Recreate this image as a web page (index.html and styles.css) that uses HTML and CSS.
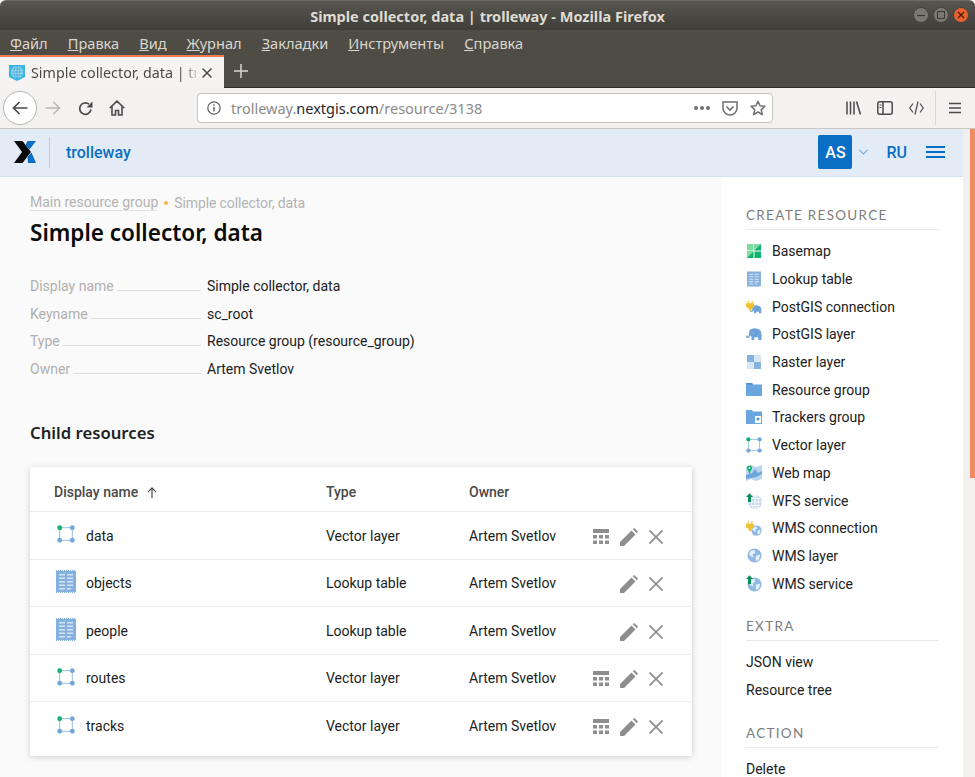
FILE: index.html
```html
<!DOCTYPE html>
<html lang="ru">
<head>
    <meta charset="UTF-8">
    <meta name="viewport" content="width=device-width, initial-scale=1.0">
    <title>Simple collector, data | trolleway</title>
    <link rel="stylesheet" href="styles.css">
</head>
<body>
    <svg class="defs" width="0" height="0">
        <symbol id="i-vector" viewBox="0 0 20 20">
            <path d="M3 3H17V17H3Z" fill="none" stroke="#8ab6e0" stroke-width="1"/>
            <circle cx="3" cy="3" r="2.7" fill="#0fb36b"/>
            <circle cx="17" cy="3" r="2.7" fill="#74a8da"/>
            <circle cx="3" cy="17" r="2.7" fill="#74a8da"/>
            <circle cx="17" cy="17" r="2.7" fill="#74a8da"/>
        </symbol>
        <symbol id="i-table" viewBox="0 0 20 23">
            <path d="M0 1H20V22H0Z" fill="#85b1de"/>
            <path d="M0 0.5H20M0 22.5H20" stroke="#85b1de" stroke-dasharray="1 1" fill="none"/>
            <path d="M3 4H9V5.5H3ZM11 4H17V5.5H11ZM3 7.5H9V9H3ZM11 7.5H17V9H11ZM3 11H9V12.5H3ZM11 11H17V12.5H11ZM3 14.5H9V16H3ZM11 14.5H17V16H11ZM3 18H9V19.5H3ZM11 18H15V19.5H11Z" fill="#d5e4f3"/>
        </symbol>
        <symbol id="i-globe" viewBox="0 0 16 16">
            <circle cx="8" cy="8" r="7.5" fill="#8fb8e2"/>
            <path d="M4 3L8 2L9 5L6 7L7 10L4 9L2 6ZM10 8L14 7L13 12L10 14L9 11Z" fill="#e4eef8"/>
        </symbol>
        <symbol id="i-grid" viewBox="0 0 16 16">
            <path d="M0 0H16V4H0ZM0 6H4V9.5H0ZM6 6H10V9.5H6ZM12 6H16V9.5H12ZM0 11.5H4V15H0ZM6 11.5H10V15H6ZM12 11.5H16V15H12Z" fill="#8e8e8e"/>
        </symbol>
        <symbol id="i-pencil" viewBox="0 0 18 18">
            <path d="M0 18V14L11.5 2.5L15.5 6.5L4 18ZM12.8 1.3L13.8 0.3Q14.2 0 14.7 0.3L17.7 3.3Q18 3.8 17.7 4.2L16.7 5.2Z" fill="#8e8e8e"/>
        </symbol>
        <symbol id="i-close" viewBox="0 0 14 14">
            <path d="M0.5 0.5L13.5 13.5M13.5 0.5L0.5 13.5" stroke="#8e8e8e" stroke-width="1.7" fill="none"/>
        </symbol>
        <symbol id="i-plug" viewBox="0 0 9 11">
            <path d="M1.8 0H3V3H6V0H7.2V3H9V6Q9 8 6 8.5V11H3V8.5Q0 8 0 6V3H1.8Z" fill="#f2c12e"/>
        </symbol>
        <symbol id="i-up" viewBox="0 0 8 10">
            <path d="M4 0L8 4.5H5.7V10H2.3V4.5H0Z" fill="#0b8f5a"/>
        </symbol>
        <symbol id="i-elephant" viewBox="0 0 19 14">
            <path d="M4.5 2Q8 -0.5 12 0.5Q18.5 1 18.5 8V14H14.5V11H10V14H6.5V10Q4 9 4 5.5Q4 3 4.5 2Z" fill="#70a4d9"/>
            <path d="M4.8 4Q4.2 11 2.2 11Q0.8 11 0.6 9" stroke="#70a4d9" stroke-width="1.8" fill="none"/>
            <path d="M8 2Q13 2 13 6Q13 9 9.5 9" stroke="#4f90cd" stroke-width="0.8" fill="none"/>
        </symbol>
    </svg>

    <header class="titlebar">
        <span class="titlebar-text">Simple collector, data | trolleway - Mozilla Firefox</span>
        <div class="wm-buttons">
            <span class="wm-btn"><svg width="8" height="8"><path d="M0 4.5H8" stroke="#3a3935" stroke-width="1.2"/></svg></span>
            <span class="wm-btn"><svg width="8" height="8"><path d="M0.5 0.5H7.5V7.5H0.5Z" stroke="#3a3935" fill="none"/></svg></span>
            <span class="wm-btn wm-close"><svg width="8" height="8"><path d="M1 1L7 7M7 1L1 7" stroke="#4a1c08" stroke-width="1.3"/></svg></span>
        </div>
    </header>

    <nav class="menubar">
        <span><u>Ф</u>айл</span>
        <span><u>П</u>равка</span>
        <span><u>В</u>ид</span>
        <span><u>Ж</u>урнал</span>
        <span><u>З</u>акладки</span>
        <span><u>И</u>нструменты</span>
        <span><u>С</u>правка</span>
    </nav>

    <div class="tabstrip">
        <div class="tab">
            <svg class="tab-icon" width="16" height="16" viewBox="0 0 16 16">
                <path d="M0 0H16V12L8 16L0 12Z" fill="#37b6e4"/>
                <circle cx="8" cy="7" r="6" fill="#a9dcef"/>
                <path d="M8 1V13M2 7H14M3 4H13M3 10H13" stroke="#37a7d6" stroke-width="0.8" fill="none"/>
                <ellipse cx="8" cy="7" rx="3" ry="6" stroke="#37a7d6" stroke-width="0.8" fill="none"/>
            </svg>
            <span class="tab-title">Simple collector, data | tr</span>
            <svg class="tab-close" width="10" height="10" viewBox="0 0 10 10"><path d="M0.5 0.5L9.5 9.5M9.5 0.5L0.5 9.5" stroke="#4a4a4a" stroke-width="1.5"/></svg>
        </div>
        <svg class="new-tab" width="14" height="14" viewBox="0 0 14 14"><path d="M7 0V14M0 7H14" stroke="#d8d6d0" stroke-width="1.5"/></svg>
    </div>

    <div class="toolbar">
        <div class="back-btn">
            <svg width="16" height="14" viewBox="0 0 16 14"><path d="M15.5 7H1.5M7.5 1L1.5 7L7.5 13" stroke="#4a4a4f" stroke-width="1.7" fill="none"/></svg>
        </div>
        <svg class="tool forward" width="16" height="14" viewBox="0 0 16 14"><path d="M0.5 7H14.5M8.5 1L14.5 7L8.5 13" stroke="#b8b8b8" stroke-width="1.7" fill="none"/></svg>
        <svg class="tool reload" width="15" height="15" viewBox="0 0 15 15"><path d="M13 8.5A5.7 5.7 0 1 1 11 3.2" stroke="#4a4a4f" stroke-width="1.7" fill="none"/><path d="M14.5 0.5V6.5H8.5Z" fill="#4a4a4f"/></svg>
        <svg class="tool home" width="16" height="16" viewBox="0 0 16 16"><path d="M0.8 8L8 1.2L15.2 8M3 6.5V15H6.5V10.5H9.5V15H13V6.5" stroke="#4a4a4f" stroke-width="1.6" fill="none"/></svg>
        <div class="urlbar">
            <svg width="14" height="14" viewBox="0 0 14 14"><circle cx="7" cy="7" r="6.2" stroke="#5f5f5f" stroke-width="1.2" fill="none"/><path d="M7 6V10.5M7 3.3V4.8" stroke="#5f5f5f" stroke-width="1.4"/></svg>
            <span class="url"><span class="url-dim">trolleway.</span>nextgis.com<span class="url-dim">/resource/3138</span></span>
            <span class="url-more"><i></i><i></i><i></i></span>
            <svg class="url-pocket" width="16" height="15" viewBox="0 0 16 15"><path d="M1 1H15V7A7 7 0 0 1 1 7Z" stroke="#6f6f6f" stroke-width="1.5" fill="none"/><path d="M4.5 5.5L8 9L11.5 5.5" stroke="#6f6f6f" stroke-width="1.6" fill="none"/></svg>
            <svg width="16" height="16" viewBox="0 0 16 16"><path d="M8 1.2L10 5.8L15 6.3L11.2 9.6L12.3 14.6L8 12L3.7 14.6L4.8 9.6L1 6.3L6 5.8Z" stroke="#6f6f6f" stroke-width="1.5" fill="none" stroke-linejoin="round"/></svg>
        </div>
        <div class="tools-right">
            <svg width="15" height="14" viewBox="0 0 15 14"><path d="M1 0.5V13.5M4.5 0.5V13.5M8 0.5V13.5M10.5 0.5L14.5 13.5" stroke="#4a4a4f" stroke-width="1.5" fill="none"/></svg>
            <svg width="16" height="14" viewBox="0 0 16 14"><rect x="0.8" y="0.8" width="14.4" height="12.4" rx="2" stroke="#4a4a4f" stroke-width="1.5" fill="none"/><path d="M6 1V13" stroke="#4a4a4f" stroke-width="1.5"/><path d="M2.5 4H4.5M2.5 6.5H4.5" stroke="#4a4a4f"/></svg>
            <svg width="15" height="14" viewBox="0 0 15 14"><path d="M4 2.5L0.8 7L4 11.5M11 2.5L14.2 7L11 11.5M9 0.5L6 13.5" stroke="#4a4a4f" stroke-width="1.2" fill="none"/></svg>
            <span class="tool-sep"></span>
            <svg width="12" height="12" viewBox="0 0 12 12"><path d="M0 1.5H12M0 6H12M0 10.5H12" stroke="#4a4a4f" stroke-width="1.6"/></svg>
        </div>
    </div>

    <div class="viewport">
        <div class="page">
            <div class="topbar">
                <svg class="logo" width="22" height="22" viewBox="0 0 22 22">
                    <path d="M0 0H8.5L17 11L8.5 22H0L8 11Z" fill="#0a0a0a"/>
                    <path d="M13.5 0H22L15.5 8.5L11.6 4Z" fill="#0a6fc4"/>
                    <path d="M17.5 11.5L22 22H14L13.5 16Z" fill="#0a6fc4"/>
                </svg>
                <span class="topbar-sep"></span>
                <span class="instance">trolleway</span>
                <span class="avatar">AS</span>
                <svg class="caret" width="9" height="6" viewBox="0 0 9 6"><path d="M0.5 0.8L4.5 4.8L8.5 0.8" stroke="#79aede" stroke-width="1.2" fill="none"/></svg>
                <span class="lang">RU</span>
                <span class="burger"><i></i><i></i><i></i></span>
            </div>
            <div class="columns">
                <main class="content">
                    <div class="crumbs"><a>Main resource group</a><b></b><span>Simple collector, data</span></div>
                    <h1>Simple collector, data</h1>
                    <dl class="props">
                        <div><dt><span>Display name</span></dt><dd>Simple collector, data</dd></div>
                        <div><dt><span>Keyname</span></dt><dd>sc_root</dd></div>
                        <div><dt><span>Type</span></dt><dd>Resource group (resource_group)</dd></div>
                        <div><dt><span>Owner</span></dt><dd>Artem Svetlov</dd></div>
                    </dl>
                    <h2>Child resources</h2>
                    <div class="card">
                        <div class="row row-head">
                            <span class="col-name">Display name <svg class="sort" width="10" height="11" viewBox="0 0 11 12"><path d="M5.5 12V1.5M1 5.5L5.5 1L10 5.5" stroke="#4a4a4a" stroke-width="1.3" fill="none"/></svg></span>
                            <span class="col-type">Type</span>
                            <span class="col-owner">Owner</span>
                        </div>
                        <div class="row">
                            <span class="col-name"><span class="res-icon"><svg width="18" height="18"><use href="#i-vector"/></svg></span>data</span>
                            <span class="col-type">Vector layer</span>
                            <span class="col-owner">Artem Svetlov</span>
                            <span class="actions"><svg width="16" height="16"><use href="#i-grid"/></svg><svg width="18" height="18"><use href="#i-pencil"/></svg><svg width="14" height="14"><use href="#i-close"/></svg></span>
                        </div>
                        <div class="row">
                            <span class="col-name"><span class="res-icon"><svg width="20" height="23"><use href="#i-table"/></svg></span>objects</span>
                            <span class="col-type">Lookup table</span>
                            <span class="col-owner">Artem Svetlov</span>
                            <span class="actions"><svg width="18" height="18"><use href="#i-pencil"/></svg><svg width="14" height="14"><use href="#i-close"/></svg></span>
                        </div>
                        <div class="row">
                            <span class="col-name"><span class="res-icon"><svg width="20" height="23"><use href="#i-table"/></svg></span>people</span>
                            <span class="col-type">Lookup table</span>
                            <span class="col-owner">Artem Svetlov</span>
                            <span class="actions"><svg width="18" height="18"><use href="#i-pencil"/></svg><svg width="14" height="14"><use href="#i-close"/></svg></span>
                        </div>
                        <div class="row">
                            <span class="col-name"><span class="res-icon"><svg width="18" height="18"><use href="#i-vector"/></svg></span>routes</span>
                            <span class="col-type">Vector layer</span>
                            <span class="col-owner">Artem Svetlov</span>
                            <span class="actions"><svg width="16" height="16"><use href="#i-grid"/></svg><svg width="18" height="18"><use href="#i-pencil"/></svg><svg width="14" height="14"><use href="#i-close"/></svg></span>
                        </div>
                        <div class="row">
                            <span class="col-name"><span class="res-icon"><svg width="18" height="18"><use href="#i-vector"/></svg></span>tracks</span>
                            <span class="col-type">Vector layer</span>
                            <span class="col-owner">Artem Svetlov</span>
                            <span class="actions"><svg width="16" height="16"><use href="#i-grid"/></svg><svg width="18" height="18"><use href="#i-pencil"/></svg><svg width="14" height="14"><use href="#i-close"/></svg></span>
                        </div>
                    </div>
                </main>
                <aside class="sidebar">
                    <h3>Create resource</h3>
                    <ul class="side-list">
                        <li><span class="side-icon"><svg width="14" height="14" viewBox="0 0 14 14"><path d="M0 0H6.5V6.5H0Z" fill="#7fdc9f"/><path d="M7.5 0H14V6.5H7.5ZM0 7.5H6.5V14H0ZM7.5 7.5H14V14H7.5Z" fill="#0fb36b"/><path d="M7.5 6.5L14 0H7.5Z" fill="#7fdc9f"/><path d="M0 14L6.5 7.5H0Z" fill="#7fdc9f"/></svg></span>Basemap</li>
                        <li><span class="side-icon"><svg width="14" height="16"><use href="#i-table"/></svg></span>Lookup table</li>
                        <li><span class="side-icon"><svg width="17" height="14" viewBox="0 0 17 14"><use href="#i-elephant" x="4" y="5" width="13" height="9"/><use href="#i-plug" x="0" y="0" width="9" height="11"/></svg></span>PostGIS connection</li>
                        <li><span class="side-icon"><svg width="19" height="14"><use href="#i-elephant"/></svg></span>PostGIS layer</li>
                        <li><span class="side-icon"><svg width="14" height="14" viewBox="0 0 14 14"><path d="M0 0H7V7H0Z" fill="#86b2de"/><path d="M7 7H14V14H7Z" fill="#86b2de"/><path d="M7 0H14V7H7ZM0 7H7V14H0Z" fill="#d9e6f4"/></svg></span>Raster layer</li>
                        <li><span class="side-icon"><svg width="16" height="13" viewBox="0 0 16 13"><path d="M0 0H6L7 1.5H16V13H0Z" fill="#6ba7de"/><path d="M0 0H6L7 1.5H0Z" fill="#4f90cd"/></svg></span>Resource group</li>
                        <li><span class="side-icon"><svg width="16" height="14" viewBox="0 0 16 14"><path d="M0 0H6L7 1.5H16V14H0Z" fill="#6ba7de"/><rect x="9" y="6" width="6" height="7" fill="#fff"/><circle cx="12" cy="9" r="1.5" fill="#4f90cd"/></svg></span>Trackers group</li>
                        <li><span class="side-icon"><svg width="16" height="16"><use href="#i-vector"/></svg></span>Vector layer</li>
                        <li><span class="side-icon"><svg width="16" height="16" viewBox="0 0 16 16"><path d="M0 2L5 0L10 2L16 0V14L10 16L5 14L0 16Z" fill="#bcd6ee"/><path d="M0 10L6 8L9 4L12 8L16 6V9L10 12L0 14Z" fill="#6ba7de"/><circle cx="3.5" cy="3" r="2.5" fill="#0fb36b"/><path d="M1.8 4.5L3.5 9L5.2 4.5Z" fill="#0fb36b"/><circle cx="3.5" cy="3" r="0.9" fill="#fff"/></svg></span>Web map</li>
                        <li><span class="side-icon"><svg width="16" height="16" viewBox="0 0 16 16"><circle cx="9" cy="9" r="7" fill="#c5d9ee"/><path d="M2 9H16M9 2V16M3.5 5.5H14.5M3.5 12.5H14.5" stroke="#fff" stroke-width="0.8"/><ellipse cx="9" cy="9" rx="3.5" ry="7" stroke="#fff" stroke-width="0.8" fill="none"/><use href="#i-up" x="0" y="0" width="7" height="9"/></svg></span>WFS service</li>
                        <li><span class="side-icon"><svg width="16" height="15" viewBox="0 0 16 15"><use href="#i-globe" x="5" y="4" width="11" height="11"/><use href="#i-plug" x="0" y="0" width="8" height="10"/></svg></span>WMS connection</li>
                        <li><span class="side-icon"><svg width="15" height="15"><use href="#i-globe"/></svg></span>WMS layer</li>
                        <li><span class="side-icon"><svg width="16" height="17" viewBox="0 0 16 17"><use href="#i-globe" x="1" y="2" width="15" height="15"/><use href="#i-up" x="0" y="0" width="7" height="9"/></svg></span>WMS service</li>
                    </ul>
                    <h3>Extra</h3>
                    <ul class="side-list">
                        <li>JSON view</li>
                        <li>Resource tree</li>
                    </ul>
                    <h3>Action</h3>
                    <ul class="side-list">
                        <li>Delete</li>
                    </ul>
                </aside>
            </div>
        </div>
        <div class="scrollbar"><div class="thumb"></div></div>
    </div>
</body>
</html>
```

FILE: styles.css
```css
* {
    box-sizing: border-box;
}
html, body {
    margin: 0;
    height: 777px;
    overflow: hidden;
}
body {
    font-family: Roboto, sans-serif;
    font-size: 14px;
    display: flex;
    flex-direction: column;
    background: #fafafa;
}
.defs {
    position: absolute;
}

/* browser chrome */
.titlebar {
    height: 30px;
    flex: none;
    display: flex;
    align-items: center;
    justify-content: center;
    position: relative;
    background: linear-gradient(#57554e, #3f3e39);
    border-top: 1px solid #6b6a63;
    border-radius: 6px 6px 0 0;
    color: #dfdbd2;
    font-family: "Noto Sans", sans-serif;
    font-weight: 700;
    font-size: 14.5px;
}
.wm-buttons {
    position: absolute;
    right: 6px;
    top: 6px;
    display: flex;
    gap: 4px;
}
.wm-btn {
    width: 16px;
    height: 16px;
    border-radius: 50%;
    background: #7a7870;
    border: 1px solid #45443f;
    display: flex;
    align-items: center;
    justify-content: center;
}
.wm-close {
    background: #e9602f;
}
.menubar {
    height: 25px;
    flex: none;
    display: flex;
    align-items: center;
    gap: 20px;
    padding-left: 10px;
    background: #4f4c45;
    color: #d9d6cd;
    font-family: "Noto Sans", sans-serif;
    font-size: 14.6px;
}
.tabstrip {
    height: 33px;
    flex: none;
    display: flex;
    align-items: flex-start;
    background: #4f4c45;
    border-bottom: 1px solid #2e2d29;
}
.tab {
    width: 224px;
    height: 33px;
    display: flex;
    align-items: center;
    gap: 6px;
    padding: 0 12px 0 9px;
    background: #f5f4f2;
    border-top: 2px solid #f07d52;
    color: #4a4a4a;
    font-family: "Noto Sans", sans-serif;
    font-size: 14.3px;
}
.tab-icon, .tab-close {
    flex: none;
}
.tab-title {
    flex: 1;
    min-width: 0;
    white-space: nowrap;
    -webkit-mask-image: linear-gradient(90deg, #000 90%, rgba(0, 0, 0, 0.25));
    mask-image: linear-gradient(90deg, #000 90%, rgba(0, 0, 0, 0.25));
}
.new-tab {
    margin: 9px 0 0 10px;
}
.toolbar {
    height: 41px;
    flex: none;
    display: flex;
    align-items: center;
    background: #f3f2f0;
    border-bottom: 1px solid #c8c7c4;
    padding-left: 3px;
}
.back-btn {
    width: 34px;
    height: 34px;
    flex: none;
    border-radius: 50%;
    background: #fff;
    border: 1px solid #b5b5b5;
    display: flex;
    align-items: center;
    justify-content: center;
}
.tool {
    flex: none;
}
.forward {
    margin-left: 8px;
}
.reload {
    margin-left: 17px;
}
.home {
    margin-left: 16px;
}
.urlbar {
    width: 576px;
    height: 30px;
    margin-left: 72px;
    flex: none;
    display: flex;
    align-items: center;
    gap: 8px;
    padding: 0 6px 0 9px;
    background: #fff;
    border: 1px solid #c5c5c5;
    border-radius: 4px;
}
.url {
    flex: 1;
    margin-left: 2px;
    font-family: "Noto Sans", sans-serif;
    font-size: 14.5px;
    color: #26262a;
}
.url-dim {
    color: #8a8a8a;
}
.url-more {
    display: flex;
    gap: 2px;
    margin-right: 4px;
}
.url-more i {
    width: 4px;
    height: 4px;
    border-radius: 50%;
    background: #6f6f6f;
}
.url-pocket {
    margin-right: 4px;
}
.tools-right {
    display: flex;
    align-items: center;
    gap: 16px;
    margin-left: 73px;
}
.tool-sep {
    width: 1px;
    height: 34px;
    background: #d8d7d4;
    margin: 0 -3px 0 -5px;
}

/* page */
.viewport {
    flex: 1;
    min-height: 0;
    display: flex;
}
.page {
    flex: 1;
    min-width: 0;
    display: flex;
    flex-direction: column;
}
.scrollbar {
    width: 12px;
    flex: none;
    background: #f1f0ee;
    display: flex;
    justify-content: flex-end;
    align-items: flex-start;
}
.thumb {
    width: 5px;
    height: 349px;
    background: #f08a63;
}
.topbar {
    height: 48px;
    flex: none;
    display: flex;
    align-items: center;
    padding: 0 18px 1px 14px;
    background: #e3ecf6;
    border-bottom: 1px solid #d9e3ee;
}
.topbar-sep {
    width: 1px;
    height: 31px;
    margin-left: 13px;
    background: #b5cde6;
}
.instance {
    margin-left: 16px;
    flex: 1;
    color: #0a6fc4;
    font-size: 16px;
    font-weight: 500;
}
.avatar {
    width: 34px;
    height: 34px;
    border-radius: 2px;
    background: #0a6fc4;
    color: #fff;
    font-size: 16px;
    font-weight: 500;
    display: flex;
    align-items: center;
    justify-content: center;
}
.caret {
    margin-left: 7px;
}
.lang {
    margin-left: 18px;
    color: #0a6fc4;
    font-size: 16px;
    font-weight: 500;
}
.burger {
    margin-left: 19px;
    width: 19px;
    display: flex;
    flex-direction: column;
    gap: 3px;
}
.burger i {
    height: 2px;
    background: #0a6fc4;
}
.columns {
    flex: 1;
    min-height: 0;
    display: flex;
}
.content {
    flex: 1;
    min-width: 0;
    padding: 17px 30px 0;
}
.crumbs {
    display: flex;
    align-items: center;
    color: #b3b3b3;
    height: 17px;
}
.crumbs a {
    border-bottom: 1px solid #e2e2e2;
}
.crumbs span {
    letter-spacing: -0.12px;
}
.crumbs b {
    width: 4px;
    height: 4px;
    border-radius: 50%;
    background: #f7b44a;
    margin: 0 6px;
}
h1 {
    margin: 6px 0 0;
    font-family: "Noto Sans", sans-serif;
    font-weight: 600;
    font-size: 22.5px;
    line-height: 32px;
    color: #0a0a0a;
}
.props {
    margin: 23px 0 0;
}
.props div {
    display: flex;
    height: 27.7px;
    align-items: center;
}
.props dt {
    width: 171px;
    margin-right: 6px;
    flex: none;
    color: #b0b0b0;
    display: flex;
    align-items: baseline;
}
.props dt::after {
    content: "";
    flex: 1;
    margin-left: 3px;
    border-bottom: 1px solid #dedede;
}
.props dd {
    margin: 0;
    color: #212121;
}
h2 {
    margin: 37px 0 0;
    font-family: "Noto Sans", sans-serif;
    font-weight: 600;
    font-size: 16.7px;
    line-height: 26px;
    color: #212121;
}
.card {
    margin-top: 21px;
    background: #fff;
    box-shadow: 0 1px 6px rgba(0, 0, 0, 0.18);
    padding-bottom: 6px;
}
.row {
    display: flex;
    align-items: center;
    height: 47.5px;
    padding-left: 24px;
    border-bottom: 1px solid #ececec;
    color: #212121;
    position: relative;
}
.row:last-child {
    border-bottom: 0;
}
.row-head {
    height: 45.5px;
    padding-top: 6px;
    font-weight: 500;
    color: #4a4a4a;
}
.col-name {
    width: 272px;
    flex: none;
    display: flex;
    align-items: center;
}
.sort {
    margin-left: 9px;
}
.res-icon {
    width: 32px;
    flex: none;
    display: flex;
    align-items: center;
    justify-content: center;
    padding-right: 8px;
    margin-bottom: 3px;
}
.col-type {
    width: 143px;
    flex: none;
}
.col-owner {
    flex: none;
    width: 124px;
}
.actions {
    flex: 1;
    display: flex;
    align-items: center;
    justify-content: flex-end;
    gap: 11px;
    padding: 2px 29px 0 0;
}
.sidebar {
    width: 241px;
    flex: none;
    padding: 30px 24px 0;
    background: #fff;
}
.sidebar h3 {
    margin: 0 0 7.5px;
    padding-bottom: 6px;
    font-family: Lato, sans-serif;
    font-weight: 400;
    font-size: 13.5px;
    line-height: 16px;
    letter-spacing: 1.3px;
    text-transform: uppercase;
    color: #7d7d7d;
    border-bottom: 1px solid #e8e8e8;
}
.side-list {
    list-style: none;
    margin: 0 0 20.7px;
    padding: 0;
}
.side-list li {
    height: 27.7px;
    display: flex;
    align-items: center;
    color: #212121;
}
.side-icon {
    width: 16px;
    margin-right: 10px;
    flex: none;
    display: flex;
    align-items: center;
    justify-content: center;
}
```
